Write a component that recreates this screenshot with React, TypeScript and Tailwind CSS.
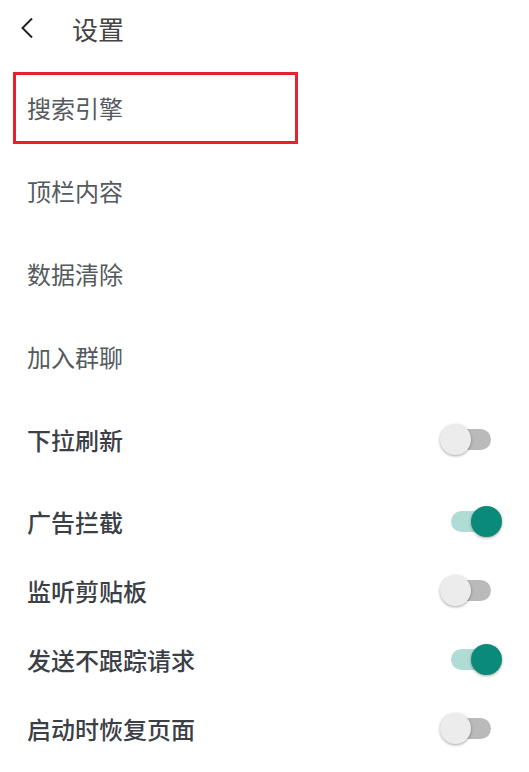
import React from "react";

const font = { fontFamily: '"Noto Sans CJK SC", "Noto Sans", sans-serif' };

function Toggle({ on }: { on: boolean }) {
  return (
    <div className="relative w-[62px] h-[31px] mr-[27px]">
      <div
        className={
          "absolute left-[11px] top-[5px] w-[40px] h-[21px] rounded-full " +
          (on ? "bg-[#b0dcd6]" : "bg-[#bababa]")
        }
      />
      <div
        className={
          "absolute top-0 w-[31px] h-[31px] rounded-full shadow-[0_1px_3px_rgba(0,0,0,0.35)] " +
          (on ? "left-[31px] bg-[#0a8a78]" : "left-0 bg-[#ececec]")
        }
      />
    </div>
  );
}

function PlainRow({ label }: { label: string }) {
  return (
    <div className="h-[83px] flex items-center pl-[27px] text-[24px] text-[#555a60]">
      {label}
    </div>
  );
}

function SwitchRow({ label, on, h }: { label: string; on: boolean; h: string }) {
  return (
    <div className={"flex items-center justify-between pl-[27px] " + h}>
      <span className="text-[24px] font-medium text-[#3b4047]">{label}</span>
      <Toggle on={on} />
    </div>
  );
}

export default function App() {
  return (
    <div className="w-[529px] h-[772px] bg-white overflow-hidden" style={font}>
      <div className="h-[56px] flex items-center">
        <svg width="14" height="22" viewBox="0 0 14 22" className="ml-[20px]">
          <path d="M12 1.5 L2.5 11 L12 20.5" fill="none" stroke="#222" strokeWidth="2" />
        </svg>
        <span className="ml-[38px] text-[26px] text-[#444]">设置</span>
      </div>
      <div className="mt-[10px]">
        <div className="h-[83px] flex items-center">
          <div className="ml-[13px] w-[285px] h-[72px] border-[3px] border-[#e6212d] flex items-center pl-[11px] text-[24px] text-[#555a60]">
            搜索引擎
          </div>
        </div>
        <PlainRow label="顶栏内容" />
        <PlainRow label="数据清除" />
        <PlainRow label="加入群聊" />
        <SwitchRow label="下拉刷新" on={false} h="h-[83px]" />
        <div className="h-[6px]" />
        <SwitchRow label="广告拦截" on={true} h="h-[69px]" />
        <SwitchRow label="监听剪贴板" on={false} h="h-[69px]" />
        <SwitchRow label="发送不跟踪请求" on={true} h="h-[69px]" />
        <SwitchRow label="启动时恢复页面" on={false} h="h-[69px]" />
      </div>
    </div>
  );
}
